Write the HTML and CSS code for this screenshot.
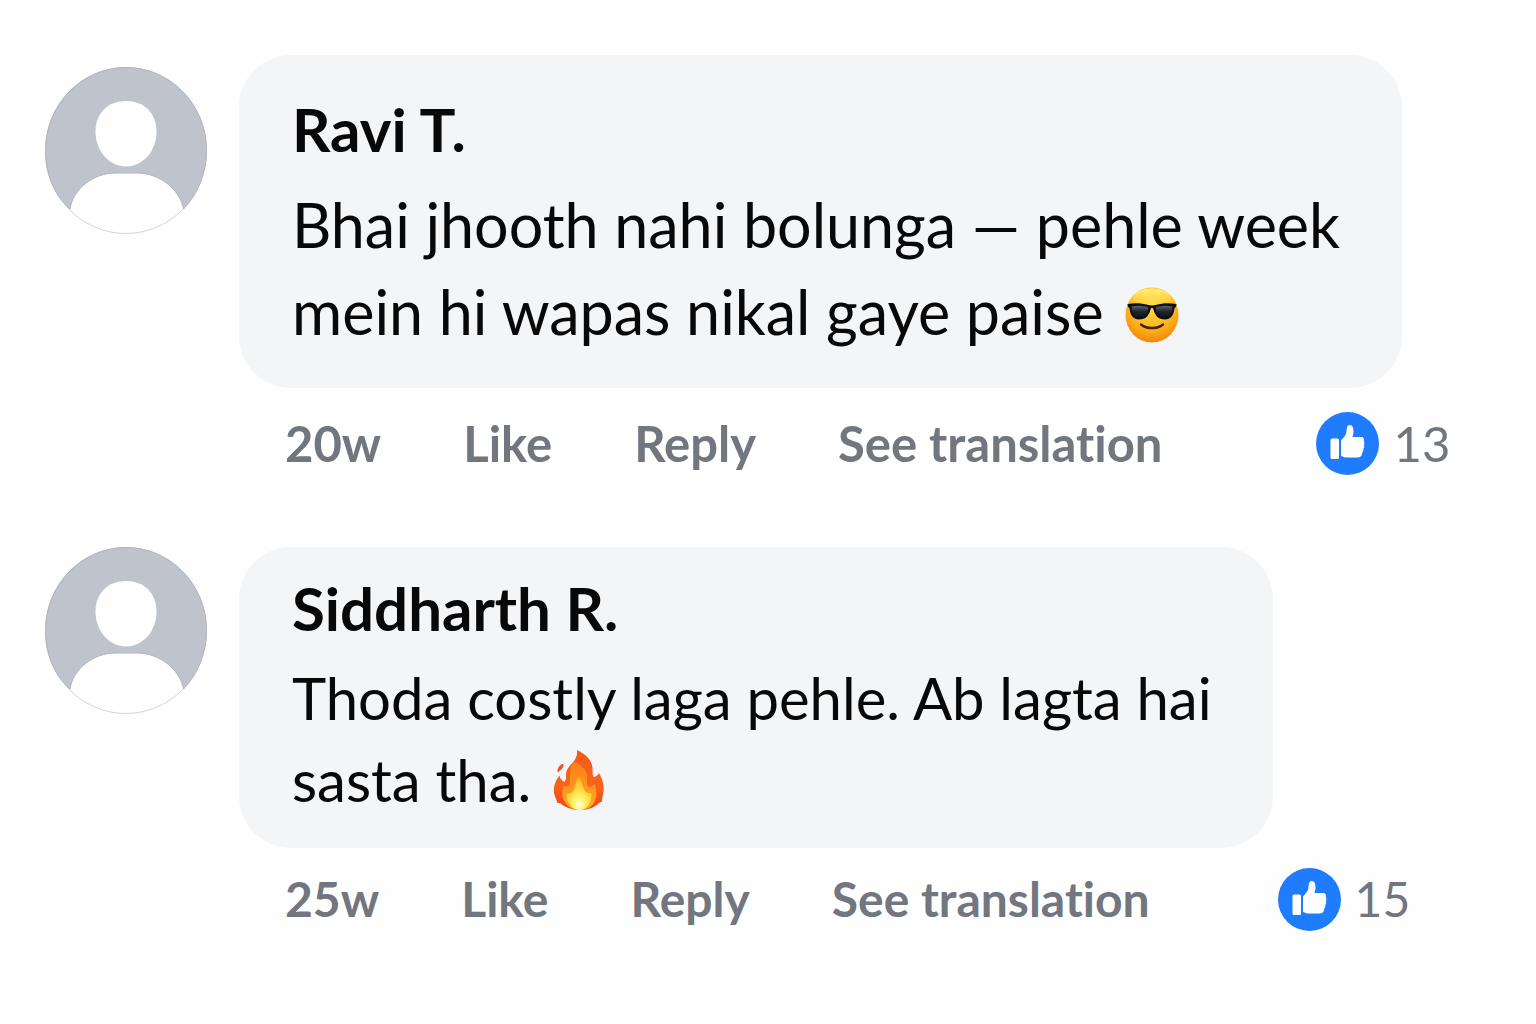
FILE: index.html
```html
<!DOCTYPE html>
<html lang="en">
<head>
	<title>Comments</title>
	<meta charset="utf-8">
	<meta name="viewport" content="width=device-width, initial-scale=1">
	<link rel="stylesheet" href="styles.css">
</head>
<body>
	<svg class="defs" aria-hidden="true">
		<symbol id="avatar" viewBox="0 0 162 167">
			<ellipse cx="81" cy="83.5" rx="80.5" ry="83" fill="#fefefe" stroke="#d4d6de"/>
			<path d="M25 142C8 127 .5 106 .5 83.500C.5 37.700 36.500 .5 81 .5s80.500 37.200 80.500 83c0 22.500-8.500 43.500-23 58.500C135 122 114 106 92 106H71C48 106 28 122 25 142z" fill="#bfc3cc" stroke="#b1b4c0"/>
			<path d="M81 34c18 0 30.500 12 30.500 30.500C111.500 84 98 99.500 81 99.500S50.500 84 50.500 64.500C50.500 46 63 34 81 34z" fill="#fefefe"/>
		</symbol>
		<symbol id="thumb" viewBox="0 0 63 63">
			<circle cx="31.500" cy="31.500" r="31.500" fill="#207cff"/>
			<rect x="14.500" y="26.500" width="8.500" height="20.500" rx="1.500" fill="#fff"/>
			<path d="M25 28.500c2.500-2.500 5-5 5.500-9 .3-3 .3-6.500 3.300-6.500 3.200 0 3.700 3.500 3.700 6.500 0 2-.7 4-1 5.500h8.500c2.500 0 3.500 2 2.700 4 1 1 1.200 2.800.1 4 .8 1.400.5 3-.6 4 .4 1.400 0 2.800-1 3.600.2 3-1.400 4.900-4.200 4.900H30c-2.500 0-3.500-1.500-5-1.500z" fill="#fff"/>
		</symbol>
	</svg>

	<main class="comments">
		<article class="comment">
			<svg class="avatar" role="img" aria-label="Ravi T."><use href="#avatar"/></svg>
			<div class="content">
				<div class="bubble">
					<h2 class="name">Ravi T.</h2>
					<p class="text">Bhai jhooth nahi bolunga — pehle week<br>mein hi wapas nikal gaye paise
						<svg class="emoji" viewBox="0 0 54 56" role="img" aria-label="smiling face with sunglasses">
							<defs>
								<radialGradient id="face" cx=".5" cy=".3" r=".75">
									<stop offset="0" stop-color="#ffdb48"/>
									<stop offset=".55" stop-color="#ffb91f"/>
									<stop offset="1" stop-color="#ef7e08"/>
								</radialGradient>
								<linearGradient id="shine" x2="0" y2="1">
									<stop offset="0" stop-color="#fff27c"/>
									<stop offset="1" stop-color="#ffd53f" stop-opacity="0"/>
								</linearGradient>
								<linearGradient id="lens" x2="0" y2="1">
									<stop offset="0" stop-color="#59606a"/>
									<stop offset=".5" stop-color="#20252b"/>
									<stop offset="1" stop-color="#111519"/>
								</linearGradient>
							</defs>
							<ellipse cx="27" cy="28" rx="26.500" ry="27.500" fill="url(#face)"/>
							<ellipse cx="27" cy="12" rx="19" ry="10.500" fill="url(#shine)"/>
							<path d="M2.500 17c8-1.500 15-.7 20 .8 3 .8 6 .8 9 0 5-1.500 12-2.300 20-.8l-.5 3-1.500 1c-.5 6-3 11.500-9.500 11.500-7 0-10-4-11.500-10-.6-2.500-2.400-2.500-3 0-1.500 6-4.500 10-11.500 10-6.500 0-9-5.500-9.500-11.500L3 20z" fill="#0d1013"/>
							<path d="M6.500 19.500c6-1.200 12-.7 17 .8-1 6-4 10-9.500 10s-7-5.300-7.500-10.800zM47.500 19.500c-6-1.200-12-.7-17 .8 1 6 4 10 9.500 10s7-5.300 7.500-10.800z" fill="url(#lens)"/>
							<path d="M16 37.500c6 4.800 16 4.800 22 0" fill="none" stroke="#47200c" stroke-width="2.500" stroke-linecap="round"/>
						</svg></p>
				</div>
				<div class="actions">
					<a href="#" class="action">20w</a>
					<button type="button" class="action">Like</button>
					<button type="button" class="action">Reply</button>
					<button type="button" class="action">See translation</button>
					<button type="button" class="likes"><svg class="thumb" aria-hidden="true"><use href="#thumb"/></svg>13</button>
				</div>
			</div>
		</article>

		<article class="comment compact">
			<svg class="avatar" role="img" aria-label="Siddharth R."><use href="#avatar"/></svg>
			<div class="content">
				<div class="bubble">
					<h2 class="name">Siddharth R.</h2>
					<p class="text">Thoda costly laga pehle. Ab lagta hai<br>sasta tha.
						<svg class="emoji" viewBox="0 0 54 60" role="img" aria-label="fire">
							<defs>
								<linearGradient id="flame" x2="0" y2="1">
									<stop offset="0" stop-color="#f4591c"/>
									<stop offset=".6" stop-color="#f8641b"/>
									<stop offset="1" stop-color="#ef4414"/>
								</linearGradient>
								<linearGradient id="inner" x2="0" y2="1">
									<stop offset="0" stop-color="#ff7d19"/>
									<stop offset="1" stop-color="#ffae20"/>
								</linearGradient>
								<radialGradient id="core" cx=".5" cy=".85" r=".8">
									<stop offset="0" stop-color="#fffde0"/>
									<stop offset=".35" stop-color="#fff05a"/>
									<stop offset="1" stop-color="#ffb724"/>
								</radialGradient>
							</defs>
							<path d="M25 0c8 4 14.500 9 15.500 17.500.4 4-.5 7 1 9.500 3-.5 4.500-2 5.500-4 3 5 5.500 12 4.500 19-.5 4-2 6.500-1.500 9.500l-3 1.500C43 57 37 60 28 60S13 57 8.500 53.500l-3.500-1c0-3-2.500-5.500-3-10-.7-7 2-12.500 5.500-17 .5 3 2 5 5 6.500 3-4 0-8 3-13C18.500 14 26 10 25 0z" fill="url(#flame)"/>
							<path d="M10 14c1.800-.5 2 1.500 1 3.500S8 20 6 22.500c-1.500-3 1-7 4-8.500z" fill="#ef5425"/>
							<path d="M22 12c7 2 12 7 13 13 .7 5-1 9 1 12 3 0 5-2 6.500-3 3 7 3 16-3 22-3 2.500-7 4-11.500 4s-9-1.500-12-4c-6-6-7-13-4-20 2 1 3 1 5 0 3-7-2-15 5-24z" fill="url(#inner)"/>
							<path d="M27 27c3.500 4 3 11 7 15 2 2 4 1 5 1 2 7-3 17-11 17s-14-8-13-16c3 0 5-1 7-4 2-4 1-9 5-13z" fill="url(#core)"/>
						</svg></p>
				</div>
				<div class="actions">
					<a href="#" class="action">25w</a>
					<button type="button" class="action">Like</button>
					<button type="button" class="action">Reply</button>
					<button type="button" class="action">See translation</button>
					<button type="button" class="likes"><svg class="thumb" aria-hidden="true"><use href="#thumb"/></svg>15</button>
				</div>
			</div>
		</article>
	</main>
</body>
</html>
```

FILE: styles.css
```css
body {
	margin: 0;
	background-color: #fefefe;
	color: #080808;
	font-family: Lato, "Liberation Sans", sans-serif;
	font-variant-ligatures: none;
}

.defs {
	position: absolute;
	width: 0;
	height: 0;
}

.comments {
	padding: 55px 45px;
	display: flex;
	flex-direction: column;
	gap: 72px;
}

.comment {
	display: flex;
	align-items: flex-start;
	gap: 32px;
}

.avatar {
	width: 162px;
	height: 167px;
	margin-top: 12px;
	flex-shrink: 0;
}

.bubble {
	width: fit-content;
	padding: 38px 62px 33px 53px;
	border-radius: 52px;
	background-color: #f4f5f7;
}

.name {
	margin: 0 0 16px;
	font-size: 60px;
	line-height: 72px;
	font-weight: bold;
}

.text {
	margin: 0;
	font-size: 61px;
	line-height: 87px;
}

.emoji {
	width: 54px;
	height: 56px;
	margin: -8px 0 -8px 6px;
}

.actions {
	margin-top: 23px;
	padding-left: 46px;
	display: flex;
	align-items: center;
	gap: 82px;
	color: #72767f;
	font-size: 49px;
	line-height: 64px;
	white-space: nowrap;
}

.action,
.likes {
	padding: 0;
	border: 0;
	background: none;
	color: inherit;
	font: inherit;
	text-decoration: none;
	cursor: pointer;
}

.action {
	font-weight: bold;
}

.likes {
	margin-left: 72px;
	display: flex;
	align-items: center;
	gap: 14px;
}

.thumb {
	width: 63px;
	height: 63px;
}

/* shorter comment */
.compact .avatar {
	margin-top: 0;
}

.compact .bubble {
	padding: 25px 61px 27px 53px;
}

.compact .name {
	margin-bottom: 13px;
}

.compact .text {
	font-size: 58px;
	line-height: 82px;
}

.compact .emoji {
	height: 60px;
}

.compact .actions {
	margin-top: 19px;
	font-size: 48px;
}

.compact .likes {
	margin-left: 46px;
}
```
